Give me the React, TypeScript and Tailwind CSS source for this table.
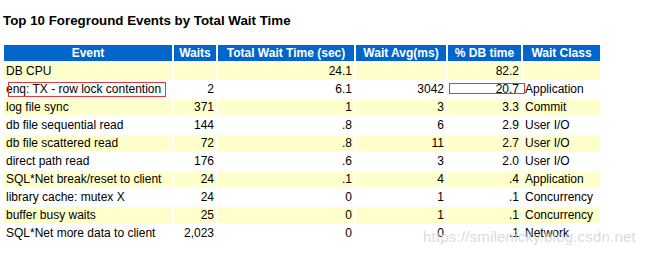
import React from 'react'

const rows = [
  { event: 'DB CPU', waits: '', total: '24.1', avg: '', pct: '82.2', cls: '' },
  { event: 'enq: TX - row lock contention', waits: '2', total: '6.1', avg: '3042', pct: '20.7', cls: 'Application' },
  { event: 'log file sync', waits: '371', total: '1', avg: '3', pct: '3.3', cls: 'Commit' },
  { event: 'db file sequential read', waits: '144', total: '.8', avg: '6', pct: '2.9', cls: 'User I/O' },
  { event: 'db file scattered read', waits: '72', total: '.8', avg: '11', pct: '2.7', cls: 'User I/O' },
  { event: 'direct path read', waits: '176', total: '.6', avg: '3', pct: '2.0', cls: 'User I/O' },
  { event: 'SQL*Net break/reset to client', waits: '24', total: '.1', avg: '4', pct: '.4', cls: 'Application' },
  { event: 'library cache: mutex X', waits: '24', total: '0', avg: '1', pct: '.1', cls: 'Concurrency' },
  { event: 'buffer busy waits', waits: '25', total: '0', avg: '1', pct: '.1', cls: 'Concurrency' },
  { event: 'SQL*Net more data to client', waits: '2,023', total: '0', avg: '0', pct: '.1', cls: 'Network' },
]

const headers = ['Event', 'Waits', 'Total Wait Time (sec)', 'Wait Avg(ms)', '% DB time', 'Wait Class']

export default function App() {
  return (
    <div className="relative w-[653px] h-[253px] bg-white overflow-hidden font-['Liberation_Sans',Arial,sans-serif] text-black">
      <h3 className="pl-[3px] pt-[13px] h-[43px] text-[13.33px] leading-4 font-bold">
        Top 10 Foreground Events by Total Wait Time
      </h3>

      <table className="ml-[2px] w-[600px] border-separate border-spacing-[2px] table-fixed text-[12px] leading-4">
        <colgroup>
          <col className="w-[168px]" />
          <col className="w-[42px]" />
          <col className="w-[136px]" />
          <col className="w-[90px]" />
          <col className="w-[73px]" />
          <col className="w-[77px]" />
        </colgroup>
        <thead>
          <tr className="h-4">
            {headers.map((h) => (
              <th key={h} className="bg-[#0066cc] text-white font-bold text-center px-[2px] py-0 whitespace-nowrap">
                {h}
              </th>
            ))}
          </tr>
        </thead>
        <tbody>
          {rows.map((r, i) => {
            const bg = i % 2 === 0 ? 'bg-[#ffffcc]' : 'bg-white'
            return (
              <tr key={r.event} className="h-4">
                <td className={`${bg} px-[2px] text-left whitespace-nowrap`}>{r.event}</td>
                <td className={`${bg} px-[2px] text-right`}>{r.waits}</td>
                <td className={`${bg} px-[2px] text-right`}>{r.total}</td>
                <td className={`${bg} px-[2px] text-right`}>{r.avg}</td>
                <td className={`${bg} px-[2px] text-right`}>{r.pct}</td>
                <td className={`${bg} px-[2px] text-left whitespace-nowrap`}>{r.cls}</td>
              </tr>
            )
          })}
        </tbody>
      </table>

      {/* red annotation boxes */}
      <div className="absolute left-[8px] top-[82px] w-[158px] h-[15px] border border-[#e53935]" />
      <div className="absolute left-[449px] top-[83px] w-[76px] h-[11px] border border-[#e53935]" />

      {/* watermark */}
      <div className="absolute left-[423px] top-[227px] text-[15px] leading-5 tracking-[0.2px] text-[#d4d4d4] opacity-80 whitespace-nowrap">
        https://smilenicky.blog.csdn.net
      </div>
    </div>
  )
}
